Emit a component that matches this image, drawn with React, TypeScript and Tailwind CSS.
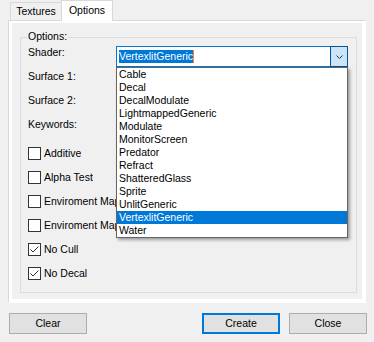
import { useState } from "react";

const SHADERS = [
  "Cable",
  "Decal",
  "DecalModulate",
  "LightmappedGeneric",
  "Modulate",
  "MonitorScreen",
  "Predator",
  "Refract",
  "ShatteredGlass",
  "Sprite",
  "UnlitGeneric",
  "VertexlitGeneric",
  "Water",
];

const FLAGS = [
  { label: "Additive", checked: false },
  { label: "Alpha Test", checked: false },
  { label: "Enviroment Map", checked: false },
  { label: "Enviroment Map Mask", checked: false },
  { label: "No Cull", checked: true },
  { label: "No Decal", checked: true },
];

function CheckBox({ label, checked }: { label: string; checked: boolean }) {
  return (
    <div className="h-[24px] flex items-center gap-[3px]">
      <div className="w-[13px] h-[13px] border border-[#333333] bg-white flex items-center justify-center">
        {checked && (
          <svg width="11" height="11" viewBox="0 0 11 11">
            <path d="M1.5 5.5 L4 8 L9.5 2.5" fill="none" stroke="#333333" strokeWidth="1" />
          </svg>
        )}
      </div>
      {/* the open shader list covers everything right of x=116 */}
      <span className="max-w-[72px] overflow-hidden whitespace-nowrap">{label}</span>
    </div>
  );
}

function Button({ label, focused }: { label: string; focused?: boolean }) {
  return (
    <button
      className={`w-[78px] h-[21px] bg-[#e1e1e1] flex items-center justify-center ${focused ? "border-2 border-[#0078d7]" : "border border-[#adadad]"}`}
    >
      {label}
    </button>
  );
}

export default function App() {
  const [shader] = useState("VertexlitGeneric");

  return (
    <div className="w-[374px] h-[342px] bg-[#f0f0f0] overflow-hidden text-[10.5px] leading-[13px] text-black font-['Liberation_Sans',Arial,sans-serif]">
      {/* Tabs */}
      <div className="h-[20px] flex items-end pl-[10px]">
        <div className="w-[52px] h-[18px] border border-b-0 border-[#d9d9d9] bg-[#f0f0f0] flex items-center justify-center">
          Textures
        </div>
        <div className="relative z-10 -ml-px -mb-px w-[52px] h-[21px] border border-b-0 border-[#d9d9d9] bg-white flex items-center justify-center pb-px">
          Options
        </div>
      </div>

      {/* Tab page */}
      <div className="mx-[8px] h-[283px] border border-[#d9d9d9] border-r-white border-b-white bg-white pt-[2px] pl-[3px] pr-[3px] pb-[3px]">
        <div className="h-full bg-[#f0f0f0] pt-[14px] pl-[8px] pr-[5px]">
          <div className="relative h-[256px] border border-[#dcdcdc]">
            <span className="absolute left-[6px] -top-[8px] px-px bg-[#f0f0f0]">Options:</span>
            <div className="pl-[7px] pt-[8px]">
              <div className="h-[24px] flex items-start">
                <span className="w-[88px]">Shader:</span>
                <div className="relative z-20 w-[232px] h-[21px] border border-[#0078d7] bg-white flex">
                  <div className="flex-1 pl-[2px] pt-[3px] flex items-start">
                    <span className="bg-[#0078d7] text-white">{shader}</span>
                    <span className="w-px h-[13px] bg-[#ff8728]" />
                  </div>
                  <div className="-my-px -mr-px w-[18px] h-[21px] border border-[#005499] bg-[#cce4f7] flex items-center justify-center">
                    <svg width="7" height="4" viewBox="0 0 7 4">
                      <path d="M0.5 0.5 L3.5 3.5 L6.5 0.5" fill="none" stroke="#333333" strokeWidth="1" />
                    </svg>
                  </div>
                  {/* Open dropdown list */}
                  <div className="absolute top-[20px] -left-px w-[232px] border border-[#646464] bg-white shadow-[2px_2px_3px_rgba(0,0,0,0.35)]">
                    {SHADERS.map(s => (
                      <div key={s} className={`h-[13px] pl-[2px] whitespace-nowrap ${s === shader ? "bg-[#0078d7] text-white" : ""}`}>
                        {s}
                      </div>
                    ))}
                  </div>
                </div>
              </div>
              <div className="h-[24px]">Surface 1:</div>
              <div className="h-[24px]">Surface 2:</div>
              <div className="h-[23px]">Keywords:</div>
              {FLAGS.map(f => (
                <CheckBox key={f.label} label={f.label} checked={f.checked} />
              ))}
            </div>
          </div>
        </div>
      </div>

      {/* Buttons */}
      <div className="mt-[10px] flex pl-[9px] pr-[7px]">
        <Button label="Clear" />
        <div className="flex-1" />
        <Button label="Create" focused />
        <div className="w-[9px]" />
        <Button label="Close" />
      </div>
    </div>
  );
}
